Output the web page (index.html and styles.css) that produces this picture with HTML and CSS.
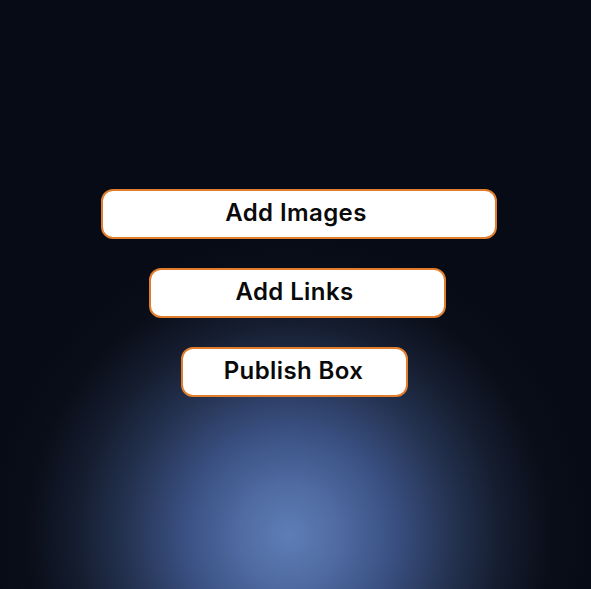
FILE: index.html
```html
<!DOCTYPE html>
<html>
<head>
<meta charset="utf-8">
<link rel="stylesheet" href="styles.css">
</head>
<body>
<main class="stage">
  <button class="pill pill-wide">Add Images</button>
  <button class="pill pill-mid">Add Links</button>
  <button class="pill pill-narrow">Publish Box</button>
</main>
</body>
</html>
```
FILE: styles.css
```css
html, body {
  margin: 0;
  padding: 0;
  width: 591px;
  height: 589px;
  overflow: hidden;
}
body {
  background: radial-gradient(circle at 289px 535px,
    #5e7db8 0px,
    #4f6ba1 50px,
    #3a5082 105px,
    #243250 165px,
    #141c2e 215px,
    #0a0e19 260px,
    #070b15 300px);
  background-color: #070b15;
  font-family: "Inter", "Lato", sans-serif;
}
.stage {
  display: flex;
  flex-direction: column;
  align-items: center;
  padding-top: 189px;
  gap: 29px;
  padding-left: 7px;
}
.pill {
  box-sizing: border-box;
  height: 50px;
  background: #ffffff;
  border: 2px solid #e27d2c;
  border-radius: 12px;
  color: #0a0a0a;
  font-family: inherit;
  font-weight: 600;
  font-size: 24px;
  letter-spacing: 0.4px;
  line-height: 1;
  padding: 0 6px 3px 0;
  display: flex;
  align-items: center;
  justify-content: center;
}
.pill-wide { width: 396px; }
.pill-mid { width: 297px; margin-left: -3px; }
.pill-narrow { width: 227px; margin-left: -9px; padding-right: 2px; }
```
